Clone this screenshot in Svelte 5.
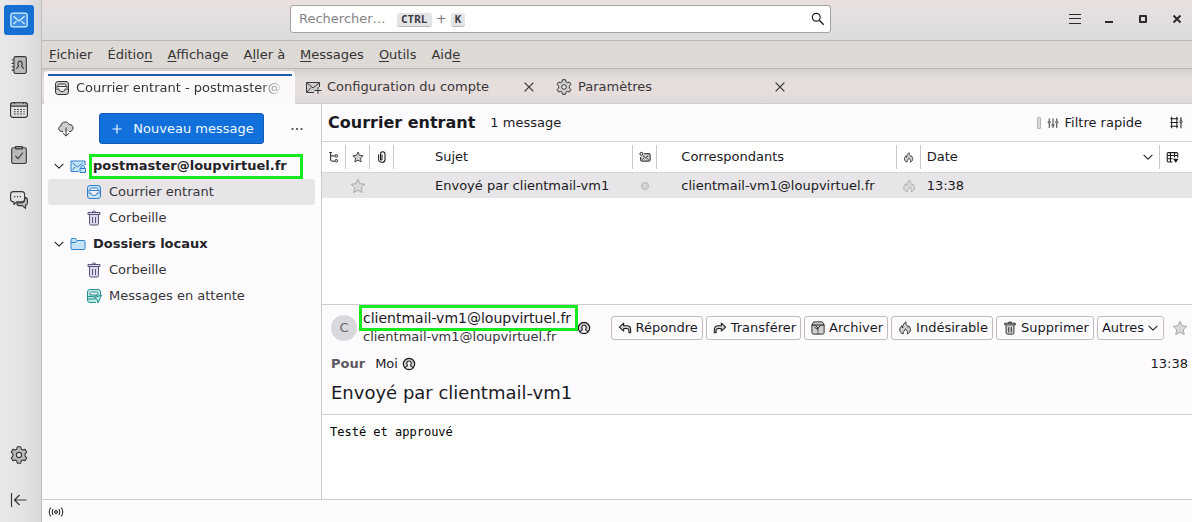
<script>
  const icons = {
    mail: '<rect x="1.5" y="2.5" width="13" height="11" rx="1.5"/><path fill="none" d="M3.5 5 8 8.8 12.500 5M3.500 11.300 6 9M12.500 11.300 10 9"/>',
    book: '<rect x="3.500" y=".5" width="11" height="15" rx="1.500"/><path fill="none" d="M1.500 3.500h2M1.500 6.500h2M1.500 9.500h2M1.500 12.500h2M6 11.500c0-1.500 1.200-1.700 1.700-2.500C6.600 7.500 7 4.500 9 4.500S11.400 7.500 10.300 9c.5.8 1.700 1 1.700 2.500"/>',
    calendar: '<rect class="paper" x=".5" y="1.500" width="15" height="13" rx="2"/><path d="M.5 4.500v-1c0-1 1-2 2-2h11c1 0 2 1 2 2v1z"/><path fill="none" stroke-dasharray="1.500 1.300" d="M3.500 7.500h9.500M3.500 9.500h9.500M3.500 11.500h9.500M4 1v1.500M12 1v1.500"/>',
    tasks: '<rect x="1.500" y="1.500" width="13" height="14" rx="1.500"/><path d="M5 .5h6v2H5z"/><path fill="none" d="m4.800 8.700 2.400 2.600 4.300-5.500"/>',
    chat: '<path d="M13 5.500c1.500.2 2.500 1 2.500 2.500v2.500c0 1.300-.8 2-1.700 2.300v2.700l-3-2.500H8c-1.500 0-2-1-2-2.500h3c3 0 4-1 4-3z"/><path class="paper" d="M3 .5h7.500C12 .5 13 1.500 13 3v4c0 1.500-1 2.500-2.500 2.500H6L3.500 12V9.500H3C1.500 9.500.5 8.500.5 7V3C.5 1.500 1.500.5 3 .5z"/><path fill="none" d="M3.700 5h1M6.200 5h1M8.700 5h1"/>',
    gear: '<path d="M6.500.7h3l.5 2.100 1.300.8 2.100-.6 1.500 2.500-1.500 1.600v1.800l1.500 1.600-1.500 2.500-2.100-.6-1.300.8-.5 2.100h-3L6 13.200l-1.300-.8-2.100.6-1.500-2.500 1.500-1.600V7.100L1.100 5.500 2.600 3l2.100.6L6 2.800z"/><circle class="paper" cx="8" cy="8" r="2.300"/>',
    collapse: '<path fill="none" stroke-width="1.200" d="M.5 1v14M15.500 8H4M8.500 3 3.500 8l5 5"/>',
    search: '<circle fill="none" cx="6" cy="6" r="4.500" stroke-width="1.300"/><path fill="none" stroke-width="1.500" d="m9.500 9.500 5 5"/>',
    menu: '<path fill="none" d="M2 3.500h12M2 7.500h12M2 12.500h12"/>',
    minimise: '<path fill="none" stroke-width="2" d="M4 11h8"/>',
    maximise: '<path fill="none" stroke-width="2" d="M5 5h6v6H5z"/>',
    quit: '<path fill="none" stroke-width="2" d="m4.500 4.500 7 7M11.500 4.500l-7 7"/>',
    close: '<path fill="none" stroke-width="1.500" d="m3 3 10 10M13 3 3 13"/>',
    inbox: '<rect x="1.500" y="1.500" width="13" height="13" rx="2.500"/><path class="paper" d="M4 5.500c0-1 .5-1.500 1.500-1.500h5c1 0 1.500.5 1.500 1.500V7h2.500v2H11c0 1.500-1 2.500-3 2.500S5 10.500 5 9H1.500V7H4z"/><path fill="none" d="M4 6.500h8"/>',
    mailplus: '<path d="M14.500 8V3.500h-13v10H9"/><path fill="none" d="m2 4 6 5 6-5M2 13l4-4.500M13 8v7M9.500 11.500h7"/>',
    cloud: '<path d="M5 10.500H4C2 10.500.8 9.300.8 7.700.8 6.200 1.700 5.200 3 5 3 2.500 4.800 1 7.200 1c2 0 3.300 1 3.900 2.600 2.300-.2 3.900 1 3.900 3.400 0 2-1.300 3.500-3.500 3.500H11"/><path fill="none" d="M8 6.500v8.500M4.800 12 8 15.200 11.200 12"/>',
    plus: '<path fill="none" stroke-width="1.200" d="M8 3.500v9M3.500 8h9"/>',
    dots: '<path fill="none" stroke-width="1.700" stroke-dasharray="2 2.500" d="M2.500 8h11"/>',
    chevron: '<path fill="none" stroke-width="1.200" d="m3 5.500 5 5 5-5"/>',
    account: '<path d="M8.500 13.500H1V3h14v4"/><path fill="none" d="m2.500 5 5 4 5-4M2.500 12 5 9"/><path d="M10 10.500h5.500v4H10zM11 10.500V9c0-2 3.500-2 3.500 0v1.500"/>',
    folder: '<path d="M1 3.500c0-.6.4-1 1-1h3.500l1.500 2h7c.6 0 1 .4 1 1v7c0 .6-.4 1-1 1H2c-.6 0-1-.4-1-1z"/><path fill="none" d="M1 6.500h4.500l1.500-2"/>',
    trash: '<path d="M3.500 5v8.500c0 .8.400 1.500 1.500 1.500h6c1.100 0 1.500-.7 1.500-1.500V5M2 2.500h12v2H2zM6 2.500c0-2 4-2 4 0"/><path fill="none" d="M6.500 7v6M9.500 7v6"/>',
    outbox: '<path d="M10 14.500H4c-1.500 0-2.500-1-2.500-2.500V4C1.500 2.500 2.500 1.500 4 1.500h8c1.500 0 2.500 1 2.500 2.500v4"/><path class="paper" d="M4 5.500C4 4.500 4.500 4 5.500 4h5c1 0 1.500.5 1.500 1.500V7H4zM1.500 8.500h6l4-1M1.500 11h7"/><path d="m15.500 7-7.500 3 3 1.500 1 3.500z"/>',
    activity: '<circle cx="8" cy="8" r="1.500"/><path fill="none" d="M5 5Q3.200 8 5 11M11 5q1.800 3 0 6M2.500 3.500Q-.5 8 2.500 12.500M13.500 3.500q3 4.500 0 9"/>',
    filter: '<path fill="none" stroke-width="1.200" d="M3 2v3M3 9v5.500M8 2v7M8 13v1.500M13 2v3M13 9v5.500"/><circle cx="3" cy="7" r="1.500"/><circle cx="8" cy="11" r="1.500"/><circle cx="13" cy="7" r="1.500"/>',
    display: '<path fill="none" stroke-width="1.300" d="M.5 3.500H10M.5 8H10M.5 12.500H10M2 1v2.500M2 12.500V15M8.500 1v2.500M8.500 12.500V15M2 3.500v9M8.500 3.500v9M13.500 1.500v4M13.500 9v6"/><circle cx="13.500" cy="7" r="1.500"/>',
    thread: '<path fill="none" stroke-width="1.300" d="M3.500 1.500v10.500c0 1 .5 1.500 1.500 1.500h4M3.500 6.500H9"/><circle cx="11" cy="6.500" r="1.800"/><circle cx="11" cy="13" r="1.800"/><path fill="none" d="M1.500 2h4"/>',
    star: '<path d="m8 1.300 2 4.400 4.800.6-3.500 3.300.9 4.900L8 12.200l-4.200 2.300.9-4.900L1.200 6.300 6 5.700z"/>',
    clip: '<path fill="none" stroke-width="1.400" d="M8 4.500v6.700c0 1.100-2 1.100-2 0V4c0-4 6-4 6 0v7.500c0 4.700-8.500 4.700-8.500 0V4.500"/>',
    read: '<path stroke-width="1.300" d="M7 3.500h6.500c.8 0 1.300.5 1.300 1.300v7.400c0 .8-.5 1.300-1.300 1.300h-10c-.8 0-1.300-.5-1.300-1.300V8"/><circle class="paper" stroke-width="1.300" cx="3.200" cy="3.800" r="2"/><path fill="none" stroke-width="1.200" d="m5.500 6.500 3 2.500 4-3M4.500 11.500l2-2M12.500 11.500l-2-2"/>',
    flame: '<path d="M6 14.800C3.500 14 2 12.300 2 10c0-2 1-3.500 2.500-4.500 0 1.200.2 2 .8 2.500C5.200 5 6.500 2.500 9 1c-.2 2 .4 3 1.500 4.200.6.600.9 1.300.9 2 .5-.3.800-.8.800-1.600C13.600 7 14.200 8.500 14.200 10c0 2.400-1.500 4-3.800 4.800C11.500 13 11 11 8.500 9 8.500 11 5 12 6 14.800z"/>',
    columns: '<path fill="none" stroke-width="1.300" d="M8 13.500H3c-1 0-1.500-.5-1.500-1.500V3.500C1.500 2.500 2 2 3 2h10c1 0 1.500.5 1.500 1.500V8M1.500 5.500h13M1.500 9.500H8M5.500 2v11.500M10.500 2v6"/><path fill="currentColor" stroke="none" d="M8.500 9.500h7L12 14.500z"/>',
    person: '<circle cx="8" cy="8" r="6.500" stroke-width="1.300"/><path class="paper" stroke-width="1.200" d="M3.700 12.800c0-1.800 1.800-2 2.500-3C4.700 7.500 5.500 4.500 8 4.500s3.300 3 1.800 5.300c.7 1 2.500 1.200 2.500 3"/>',
    reply: '<path stroke-width="1.200" d="M6.500 2.500v3H10c3 0 4.500 2 4.500 4.500v3.500h-2V11c0-1.500-1-2.500-2.500-2.500H6.500v3L1.500 7z"/>',
    forward: '<path stroke-width="1.200" d="M9.500 2.500v3H6C3 5.500 1.500 7.500 1.500 10v3.500h2V11c0-1.500 1-2.500 2.500-2.500h3.500v3l5-4.500z"/>',
    archive: '<path d="M1 4.500v8.500c0 1.300.7 2 2 2h10c1.300 0 2-.7 2-2V4.500z"/><path d="M3 1h10l2 3.500H1zM5 4.500l3 4 3-4M4 7l4 3"/><path fill="none" stroke-dasharray="1.500 1" d="M8 8v7"/>'
  };

  const spaces = [
    ['book', "Carnet d'adresses"],
    ['calendar', 'Agenda'],
    ['tasks', 'Tâches'],
    ['chat', 'Messagerie instantanée']
  ];
  const menus = [
    ['', 'F', 'ichier'], ['Éditio', 'n', ''], ['', 'A', 'ffichage'], ['A', 'l', 'ler à'],
    ['', 'M', 'essages'], ['', 'O', 'utils'], ['Aid', 'e', '']
  ];
  const folders = [
    { name: 'postmaster@loupvirtuel.fr', icon: 'account', tint: 'blue', root: true, marked: true },
    { name: 'Courrier entrant', icon: 'inbox', tint: 'blue', selected: true },
    { name: 'Corbeille', icon: 'trash', tint: 'violet' },
    { name: 'Dossiers locaux', icon: 'folder', tint: 'blue', root: true },
    { name: 'Corbeille', icon: 'trash', tint: 'violet' },
    { name: 'Messages en attente', icon: 'outbox', tint: 'teal' }
  ];
  const actions = [
    ['reply', 'Répondre'], ['forward', 'Transférer'], ['archive', 'Archiver'],
    ['flame', 'Indésirable'], ['trash', 'Supprimer']
  ];
</script>

{#snippet icon(name, size = 16)}
  <svg class="icon" width={size} height={size} viewBox="0 0 16 16" aria-hidden="true">{@html icons[name]}</svg>
{/snippet}

<div class="window">
  <nav class="rail" aria-label="Espaces">
    <button class="current" aria-label="Courrier">{@render icon('mail', 20)}</button>
    {#each spaces as [name, label]}
      <button aria-label={label}>{@render icon(name, 18)}</button>
    {/each}
    <span class="spacer"></span>
    <button aria-label="Paramètres">{@render icon('gear', 18)}</button>
    <button aria-label="Réduire">{@render icon('collapse', 16)}</button>
  </nav>

  <div class="frame">
    <header class="titlebar">
      <div class="search">
        <input type="text" placeholder="Rechercher…" aria-label="Rechercher" />
        <span class="keys"><kbd>CTRL</kbd> + <kbd>K</kbd></span>
        <button aria-label="Lancer la recherche">{@render icon('search', 14)}</button>
      </div>
      <div class="controls">
        <button aria-label="Menu">{@render icon('menu')}</button>
        <button aria-label="Minimiser">{@render icon('minimise')}</button>
        <button aria-label="Agrandir">{@render icon('maximise')}</button>
        <button aria-label="Fermer">{@render icon('quit')}</button>
      </div>
    </header>

    <nav class="menubar" aria-label="Menu principal">
      {#each menus as [before, key, after]}
        <button>{before}<u>{key}</u>{after}</button>
      {/each}
    </nav>

    <div class="tabs" role="tablist">
      <div class="tab active" role="tab" aria-selected="true" tabindex="0">
        {@render icon('inbox')}<span>Courrier entrant - postmaster@</span>
      </div>
      <div class="tab" role="tab" aria-selected="false" tabindex="-1">
        {@render icon('mailplus')}<span>Configuration du compte</span>
        <button aria-label="Fermer l'onglet">{@render icon('close', 14)}</button>
      </div>
      <div class="tab" role="tab" aria-selected="false" tabindex="-1">
        {@render icon('gear')}<span>Paramètres</span>
        <button aria-label="Fermer l'onglet">{@render icon('close', 14)}</button>
      </div>
    </div>

    <div class="content">
      <aside>
        <div class="tools">
          <button class="fetch" aria-label="Relever les messages">{@render icon('cloud')}</button>
          <button class="compose">{@render icon('plus')}Nouveau message</button>
          <button class="more" aria-label="Options des dossiers">{@render icon('dots')}</button>
        </div>
        <ul>
          {#each folders as folder}
            <li class:root={folder.root} class:selected={folder.selected}>
              {#if folder.root}<span class="twisty">{@render icon('chevron', 14)}</span>{/if}
              <span class="glyph {folder.tint}">{@render icon(folder.icon)}</span>
              <span class:marked={folder.marked}>{folder.name}</span>
            </li>
          {/each}
        </ul>
      </aside>

      <main>
        <section class="list">
          <div class="listhead">
            <h1>Courrier entrant</h1>
            <span>1 message</span>
            <button class="quick"><i></i>{@render icon('filter', 12)}Filtre rapide</button>
            <button aria-label="Options d'affichage">{@render icon('display', 13)}</button>
          </div>
          <table>
            <colgroup>
              <col class="slim" /><col class="slim" /><col class="slim" /><col />
              <col class="slim" /><col /><col class="slim" /><col /><col class="picker" />
            </colgroup>
            <thead>
              <tr>
                <th>{@render icon('thread', 12)}</th>
                <th>{@render icon('star', 12)}</th>
                <th>{@render icon('clip', 12)}</th>
                <th class="subject">Sujet</th>
                <th>{@render icon('read', 12)}</th>
                <th class="people">Correspondants</th>
                <th>{@render icon('flame', 11)}</th>
                <th class="date"><span>Date{@render icon('chevron', 14)}</span></th>
                <th class="pick">{@render icon('columns', 13)}</th>
              </tr>
            </thead>
            <tbody>
              <tr>
                <td></td>
                <td class="faint">{@render icon('star')}</td>
                <td></td>
                <td class="subject">Envoyé par clientmail-vm1</td>
                <td><i class="dot"></i></td>
                <td class="people">clientmail-vm1@loupvirtuel.fr</td>
                <td class="faint">{@render icon('flame', 14)}</td>
                <td class="date">13:38</td>
                <td></td>
              </tr>
            </tbody>
          </table>
        </section>

        <article>
          <header class="message">
            <div class="top">
              <span class="avatar">C</span>
              <div class="sender">
                <span class="name marked">clientmail-vm1@loupvirtuel.fr</span>
                <span>clientmail-vm1@loupvirtuel.fr</span>
              </div>
              <span class="contact">{@render icon('person', 14)}</span>
              <div class="actions">
                {#each actions as [name, label]}
                  <button>{@render icon(name, 14)}{label}</button>
                {/each}
                <button class="others">Autres{@render icon('chevron', 14)}</button>
                <button class="flag faint" aria-label="Suivi">{@render icon('star')}</button>
              </div>
            </div>
            <div class="to"><b>Pour</b> Moi {@render icon('person', 14)}<time>13:38</time></div>
            <h2>Envoyé par clientmail-vm1</h2>
          </header>
          <pre>Testé et approuvé</pre>
        </article>
      </main>
    </div>

    <footer><button aria-label="État de la connexion">{@render icon('activity')}</button></footer>
  </div>
</div>

<style>
  :global(body) {
    margin: 0;
  }

  .window {
    display: flex;
    min-height: 100vh;
    font: 13px/18px "DejaVu Sans", sans-serif;
    color: #1a1a1e;
    background: #fdfbfe;
  }

  .window :global(*) {
    box-sizing: border-box;
  }

  button {
    display: flex;
    align-items: center;
    justify-content: center;
    margin: 0;
    padding: 0;
    border: 0;
    background: none;
    color: inherit;
    font: inherit;
    white-space: nowrap;
  }

  .icon {
    display: block;
    flex: none;
    overflow: visible;
    fill: var(--fill, #cfcdcf);
    stroke: currentColor;
    stroke-linejoin: round;
  }

  .icon :global(.paper) {
    fill: var(--paper, #f2f0f2);
  }

  .rail {
    display: flex;
    flex: none;
    flex-direction: column;
    gap: 15px;
    width: 42px;
    padding: 5px 4px 7px;
    border-right: 1px solid #bebcbd;
    background: linear-gradient(90deg, #e9e7e7, #e3e2e2 60%, #d8d8d8);
    color: #38363a;
    --fill: #bbb9bb;
    --paper: #e3e2e2;
  }

  .rail button {
    width: 30px;
    height: 30px;
    border-radius: 3px;
  }

  .rail .current {
    background: #1670d4;
    color: #d3f3ff;
    --fill: #3d8de4;
  }

  .spacer {
    flex: 1;
  }

  .frame {
    display: flex;
    flex: 1;
    flex-direction: column;
    min-width: 0;
  }

  .titlebar {
    display: flex;
    justify-content: flex-end;
    align-items: center;
    height: 41px;
    padding: 0 7px 2px 248px;
    border-bottom: 1px solid #b9b7b6;
    background: linear-gradient(#e9dfde, #e4dfdf 45%, #dcdbde);
  }

  .search {
    position: relative;
    display: flex;
    flex: 0 1 541px;
    height: 28px;
    margin-right: auto;
    border: 1px solid #a5a1a3;
    border-radius: 3px;
    background: #fff;
  }

  .search input {
    flex: 1;
    min-width: 0;
    padding: 0 8px;
    border: 0;
    background: none;
    font: 13px/18px "DejaVu Sans", sans-serif;
  }

  .search input::placeholder {
    color: #858387;
    opacity: 1;
  }

  .search button {
    width: 24px;
    color: #18171b;
  }

  .keys {
    position: absolute;
    top: 4px;
    left: 106px;
    color: #77757a;
  }

  kbd {
    padding: 0 4px;
    border-radius: 3px;
    background: #e3e4e6;
    box-shadow: 0 1px #b7b7ba;
    color: #3c3b40;
    font: bold 11px/14px "DejaVu Sans Mono", monospace;
  }

  .controls {
    display: flex;
    gap: 18px;
    color: #2c2a2d;
  }

  .menubar {
    display: flex;
    gap: 15px;
    height: 28px;
    padding: 0 7px;
    border-bottom: 1px solid #bbb7b4;
    background: #dddad5;
    color: #353334;
  }

  u {
    text-underline-offset: 2px;
  }

  .tabs {
    display: flex;
    height: 35px;
    padding: 2px 2px 0;
    border-bottom: 1px solid #cfcbcd;
    background: linear-gradient(#d3d0cd, #e5dedc 30%, #e7dddc 70%, #dedadb);
    color: #38363a;
  }

  .tab {
    display: flex;
    flex: 0 1 251px;
    gap: 6px;
    align-items: center;
    min-width: 0;
    padding: 0 10px;
  }

  .tab span {
    flex: 1;
    overflow: hidden;
    white-space: nowrap;
  }

  .tab.active {
    position: relative;
    margin-bottom: -1px;
    border-radius: 4px 4px 0 0;
    background: #fbf9fb;
  }

  .tab.active::before {
    position: absolute;
    top: 3px;
    right: 3px;
    left: 4px;
    height: 2px;
    background: #1f5fae;
    content: "";
  }

  .tab.active span {
    -webkit-mask: linear-gradient(90deg, #000 88%, transparent);
    mask: linear-gradient(90deg, #000 88%, transparent);
  }

  .content {
    display: flex;
    flex: 1;
  }

  aside {
    flex: none;
    width: 280px;
    border-right: 1px solid #cbc9cc;
    color: #37353a;
  }

  .tools {
    display: flex;
    gap: 25px;
    align-items: center;
    padding: 9px 16px;
  }

  .compose {
    gap: 8px;
    width: 165px;
    height: 31px;
    border: 1px solid #1259b0;
    border-radius: 3px;
    background: #1270dc;
    color: #eef8ff;
  }

  .more {
    margin-left: auto;
  }

  ul {
    margin: 0;
    padding: 0 6px;
    list-style: none;
  }

  li {
    display: flex;
    gap: 7px;
    align-items: center;
    height: 26px;
    padding-left: 38px;
    border-radius: 3px;
    white-space: nowrap;
  }

  li.root {
    padding-left: 4px;
    color: #242328;
    font-weight: bold;
  }

  li.selected {
    background: #e7e5e7;
  }

  .twisty {
    margin-right: -3px;
  }

  .blue {
    color: #2f7fcb;
    --fill: #c5e4fa;
  }

  .violet {
    color: #5b5379;
    --fill: #dcd7ec;
  }

  .teal {
    color: #23918f;
    --fill: #bfe9e4;
  }

  .marked {
    position: relative;
  }

  .marked::after {
    position: absolute;
    inset: -3px -16px -4px -4px;
    border: 3px solid #18ea22;
    content: "";
  }

  .name.marked::after {
    inset: -4px -7px -4px -4px;
  }

  main {
    display: flex;
    flex: 1;
    flex-direction: column;
    min-width: 0;
  }

  .list {
    flex: none;
    min-height: 200px;
    background: #fff;
  }

  .listhead {
    display: flex;
    align-items: center;
    height: 38px;
    padding: 0 9px 0 6px;
    border-bottom: 1px solid #d6d4d7;
    background: #fdfbfe;
  }

  h1 {
    margin: 0 15px 0 0;
    font-size: 16px;
    line-height: 22px;
  }

  .quick {
    gap: 6px;
    margin: 0 28px 0 auto;
  }

  .quick i {
    width: 4px;
    height: 12px;
    border: 1px solid #b5b3b6;
    border-radius: 1px;
    background: #dddbde;
  }

  table {
    width: 100%;
    border-spacing: 0;
    table-layout: fixed;
  }

  .slim {
    width: 24px;
  }

  .picker {
    width: 32px;
  }

  th,
  td {
    padding: 0;
    font-weight: normal;
    text-align: left;
    white-space: nowrap;
  }

  th {
    height: 31px;
    border-bottom: 1px solid #d9d7da;
    background: linear-gradient(#c9c7ca, #c9c7ca) right center / 1px 24px no-repeat;
  }

  th:last-child {
    background: none;
  }

  td {
    height: 25px;
    background: #e7e5e7;
  }

  th > .icon,
  td > .icon,
  .dot {
    margin: 0 auto;
  }

  .subject {
    padding-left: 41px;
  }

  .people {
    padding-left: 24px;
  }

  .date {
    padding-left: 6px;
  }

  .date span {
    display: flex;
    align-items: center;
    justify-content: space-between;
    padding-right: 5px;
  }

  .pick {
    padding-right: 7px;
  }

  .dot {
    display: block;
    width: 8px;
    height: 8px;
    border: 1px solid #b5b3b5;
    border-radius: 50%;
    background: #d6d4d6;
  }

  .faint {
    color: #aaa8ab;
    --fill: #dad8db;
  }

  article {
    display: flex;
    flex: 1;
    flex-direction: column;
    border-top: 1px solid #cfcdd0;
    background: #fff;
  }

  .message {
    padding: 4px 4px 9px 9px;
    border-bottom: 1px solid #d3d1d4;
    background: #fdfbfe;
  }

  .top {
    display: flex;
    align-items: center;
  }

  .avatar {
    flex: none;
    width: 26px;
    height: 26px;
    margin-right: 6px;
    border-radius: 50%;
    background: #d9d8dd;
    color: #66656c;
    line-height: 26px;
    text-align: center;
  }

  .sender {
    display: flex;
    flex-direction: column;
    gap: 1px;
    color: #38363b;
  }

  .name {
    color: #1a1a1e;
    font-size: 14px;
  }

  .contact {
    margin-left: 6px;
  }

  .actions {
    display: flex;
    gap: 3px;
    margin-left: auto;
  }

  .actions button {
    gap: 4px;
    height: 24px;
    padding: 0 4px 0 6px;
    border: 1px solid #c3b9c0;
    border-radius: 3px;
  }

  .actions .others {
    gap: 2px;
    padding: 0 3px 0 4px;
  }

  .actions .flag {
    margin-left: 5px;
    padding: 0;
    border: 0;
  }

  .to {
    display: flex;
    gap: 4px;
    align-items: center;
    margin: 9px 0 8px;
  }

  .to b {
    margin-right: 6px;
    color: #5c5a60;
  }

  .to time {
    margin-left: auto;
  }

  h2 {
    margin: 0;
    font-size: 18px;
    font-weight: normal;
    line-height: 24px;
  }

  pre {
    margin: 0;
    padding: 8px;
    color: #000;
    font: 12px/18px "DejaVu Sans Mono", monospace;
  }

  footer {
    display: flex;
    height: 23px;
    padding: 1px 6px 0;
    border-top: 1px solid #cfcdd0;
  }
</style>
